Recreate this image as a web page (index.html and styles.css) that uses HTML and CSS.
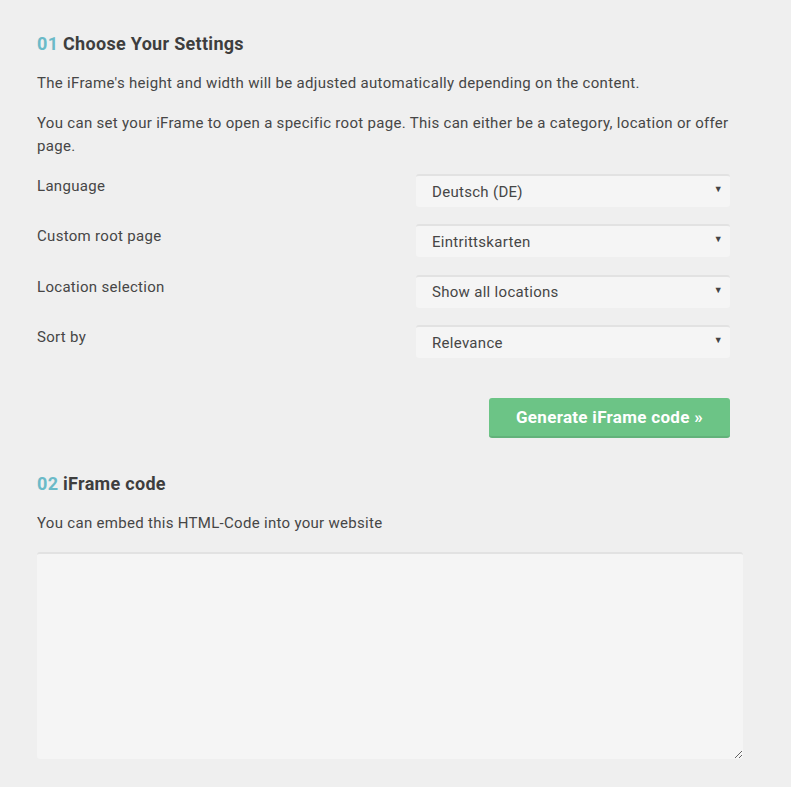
FILE: index.html
```html
<!DOCTYPE html>
<html>
<head>
<meta charset="utf-8">
<link rel="stylesheet" href="styles.css">
</head>
<body>
<div class="page">
  <h2 class="heading"><span class="num">01</span> Choose Your Settings</h2>
  <p class="text">The iFrame's height and width will be adjusted automatically depending on the content.</p>
  <p class="text">You can set your iFrame to open a specific root page. This can either be a category, location or offer page.</p>
  <div class="form">
    <div class="row">
      <span class="label">Language</span>
      <div class="select"><span>Deutsch (DE)</span><span class="arrow">▼</span></div>
    </div>
    <div class="row">
      <span class="label">Custom root page</span>
      <div class="select"><span>Eintrittskarten</span><span class="arrow">▼</span></div>
    </div>
    <div class="row">
      <span class="label">Location selection</span>
      <div class="select"><span>Show all locations</span><span class="arrow">▼</span></div>
    </div>
    <div class="row">
      <span class="label">Sort by</span>
      <div class="select"><span>Relevance</span><span class="arrow">▼</span></div>
    </div>
    <div class="actions">
      <button class="btn">Generate iFrame code »</button>
    </div>
  </div>
  <h2 class="heading second"><span class="num">02</span> iFrame code</h2>
  <p class="text last">You can embed this HTML-Code into your website</p>
  <textarea class="code"></textarea>
</div>
</body>
</html>
```
FILE: styles.css
```css
html, body {
  margin: 0;
  padding: 0;
  background: #efefef;
}
body {
  font-family: Roboto, "Liberation Sans", sans-serif;
  color: #444;
}
.page {
  padding: 31px 0 0 37px;
  width: 706px;
}
.heading {
  margin: 0 0 15px;
  font-size: 18px;
  font-weight: 700;
  color: #3e3e3e;
  line-height: 26px;
  letter-spacing: 0.3px;
}
.heading.second {
  margin-top: 33px;
  margin-bottom: 15px;
}
.num {
  color: #6bbac8;
}
.text {
  margin: 0 0 17px;
  font-size: 15px;
  line-height: 23px;
  color: #464646;
  letter-spacing: 0.3px;
}
.text.last {
  margin-bottom: 17px;
}
.form {
  width: 693px;
  margin-top: 0;
}
.row {
  display: flex;
  justify-content: space-between;
  align-items: flex-start;
  height: 50.4px;
}
.label {
  font-size: 15px;
  line-height: 23px;
  letter-spacing: 0.3px;
  color: #464646;
}
.select {
  width: 314px;
  height: 33px;
  box-sizing: border-box;
  background: #f5f5f5;
  border-top: 2px solid #e2e2e2;
  border-radius: 3px;
  display: flex;
  align-items: center;
  justify-content: space-between;
  padding: 0 7px 0 16px;
  font-size: 15px;
  letter-spacing: 0.3px;
  color: #464646;
  margin-top: -1px;
}
.arrow {
  font-size: 9px;
  color: #444;
  margin-top: -5px;
}
.actions {
  display: flex;
  justify-content: flex-end;
  margin-top: 21px;
}
.btn {
  width: 241px;
  height: 40px;
  border: 0;
  border-bottom: 2px solid #62b27a;
  border-radius: 3px;
  background: #6cc486;
  color: #fff;
  font-family: Roboto, "Liberation Sans", sans-serif;
  font-weight: 700;
  font-size: 17px;
  letter-spacing: 0.3px;
  padding: 0;
}
.code {
  display: block;
  width: 706px;
  height: 207px;
  box-sizing: border-box;
  background: #f5f5f5;
  border: 0;
  border-top: 2px solid #e2e2e2;
  border-radius: 3px;
  margin: 0;
  padding: 8px;
  font-family: Roboto, "Liberation Sans", sans-serif;
  font-size: 14px;
}
```
